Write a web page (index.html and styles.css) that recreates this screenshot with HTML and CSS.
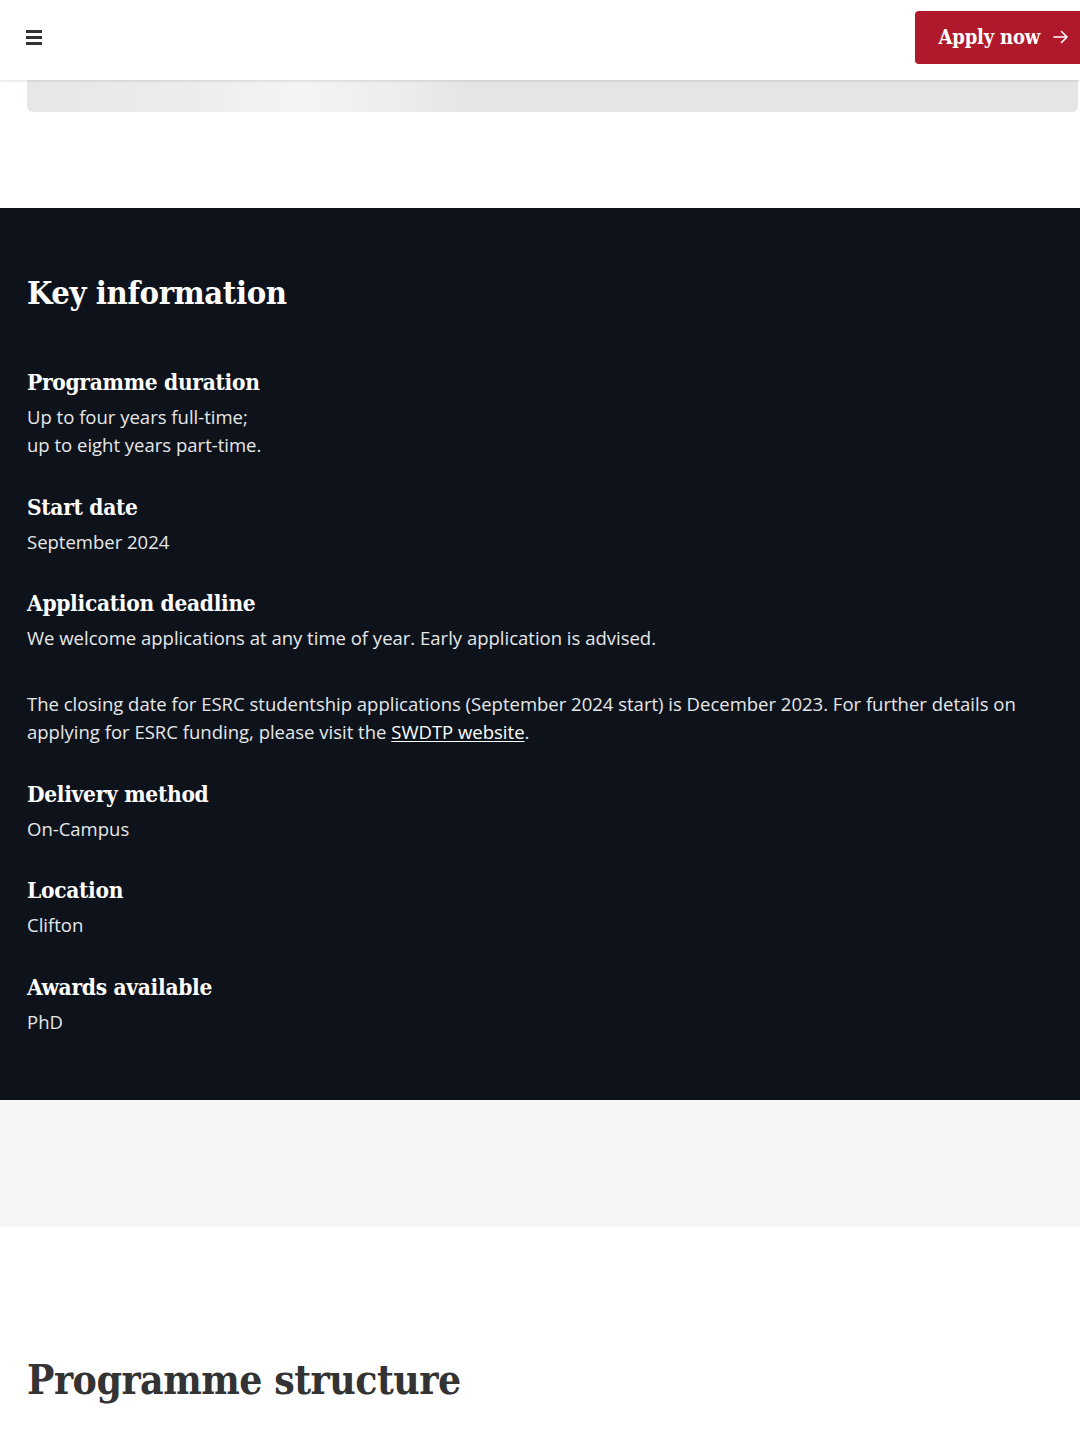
FILE: index.html
```html
<!DOCTYPE html>
<html lang="en">
<head>
<meta charset="utf-8">
<title>Key information</title>
<link rel="stylesheet" href="styles.css">
</head>
<body>
<header class="site-header">
	<a href="#" class="menu-toggle" aria-label="Menu">
		<span></span><span></span><span></span>
	</a>
	<a href="#" class="apply-btn">Apply now
		<svg width="18" height="18" viewBox="0 0 18 18" aria-hidden="true"><path d="M2 9h13M9.5 3.5 15 9l-5.5 5.5" fill="none" stroke="#fff" stroke-width="1.6" stroke-linecap="round" stroke-linejoin="round"/></svg>
	</a>
</header>
<div class="loading-bar"></div>

<section class="key-info">
	<h2>Key information</h2>
	<dl>
		<dt>Programme duration</dt>
		<dd><p>Up to four years full-time;<br>up to eight years part-time.</p></dd>

		<dt>Start date</dt>
		<dd><p>September 2024</p></dd>

		<dt>Application deadline</dt>
		<dd>
			<p>We welcome applications at any time of year. Early application is advised.</p>
			<p>The closing date for ESRC studentship applications (September 2024 start) is December 2023. For further details on applying for ESRC funding, please visit the <a href="#">SWDTP website</a>.</p>
		</dd>

		<dt>Delivery method</dt>
		<dd><p>On-Campus</p></dd>

		<dt>Location</dt>
		<dd><p>Clifton</p></dd>

		<dt>Awards available</dt>
		<dd><p>PhD</p></dd>
	</dl>
</section>

<div class="grey-band"></div>

<section class="structure">
	<h2>Programme structure</h2>
</section>
</body>
</html>
```

FILE: styles.css
```css
html, body {margin: 0; padding: 0;}
body {
	font-family: "Open Sans", "Noto Sans", sans-serif;
	background: #fff;
	color: #333;
}

.site-header {
	height: 80px;
	display: flex;
	align-items: center;
	justify-content: space-between;
	padding-left: 26px;
	background: #fff;
	box-shadow: 0 1px 3px rgba(0,0,0,0.12);
	position: relative;
	z-index: 2;
	overflow: hidden;
}

.menu-toggle {
	display: flex;
	flex-direction: column;
	gap: 3.5px;
	width: 16px;
	margin-top: -5px;
}

.menu-toggle span {
	display: block;
	height: 2.5px;
	background: #333;
}

.apply-btn {
	display: flex;
	align-items: center;
	gap: 12px;
	height: 53px;
	margin-top: -6px;
	margin-right: -12px;
	padding: 0 22px 0 24px;
	background: #b0182c;
	border-radius: 4px;
	color: #fff;
	text-decoration: none;
	font-family: "DejaVu Serif", serif;
	font-stretch: condensed;
	font-weight: bold;
	font-size: 20px;
	letter-spacing: -0.2px;
}

.loading-bar {
	height: 32px;
	margin: 0 2px 0 27px;
	border-radius: 0 0 6px 6px;
	background: linear-gradient(90deg, #e6e8e8 0%, #ebeded 15%, #f4f4f4 26%, #ebeded 36%, #e4e6e6 42%, #e4e6e6 100%);
}

.key-info {
	margin-top: 96px;
	background: #0e131b;
	color: #e6e7e8;
	padding: 65px 27px 64px;
}

.key-info h2 {
	margin: 0 0 55px;
	font-family: "DejaVu Serif", serif;
	font-stretch: condensed;
	font-weight: bold;
	font-size: 32.5px;
	line-height: 40px;
	letter-spacing: -0.4px;
	color: #fff;
}

.key-info dl {margin: 0;}

.key-info dt {
	font-family: "DejaVu Serif", serif;
	font-stretch: condensed;
	font-weight: bold;
	font-size: 22.5px;
	line-height: 28px;
	letter-spacing: -0.3px;
	color: #fff;
	margin-bottom: 7px;
}

.key-info dd {
	margin: 0 0 33.5px;
}

.key-info dd:last-child {margin-bottom: 0;}

.key-info p {
	margin: 0;
	font-size: 18.5px;
	line-height: 28px;
}

.key-info p + p {margin-top: 38px;}

.key-info a {
	color: #fff;
	text-decoration: underline;
	text-underline-offset: 2px;
}

.grey-band {
	height: 127px;
	background: #f5f5f5;
}

.structure {
	padding: 129px 27px 40px;
}

.structure h2 {
	margin: 0;
	font-family: "DejaVu Serif", serif;
	font-stretch: condensed;
	font-weight: bold;
	font-size: 40.5px;
	line-height: 48px;
	letter-spacing: -0.5px;
	color: #333;
}
```
